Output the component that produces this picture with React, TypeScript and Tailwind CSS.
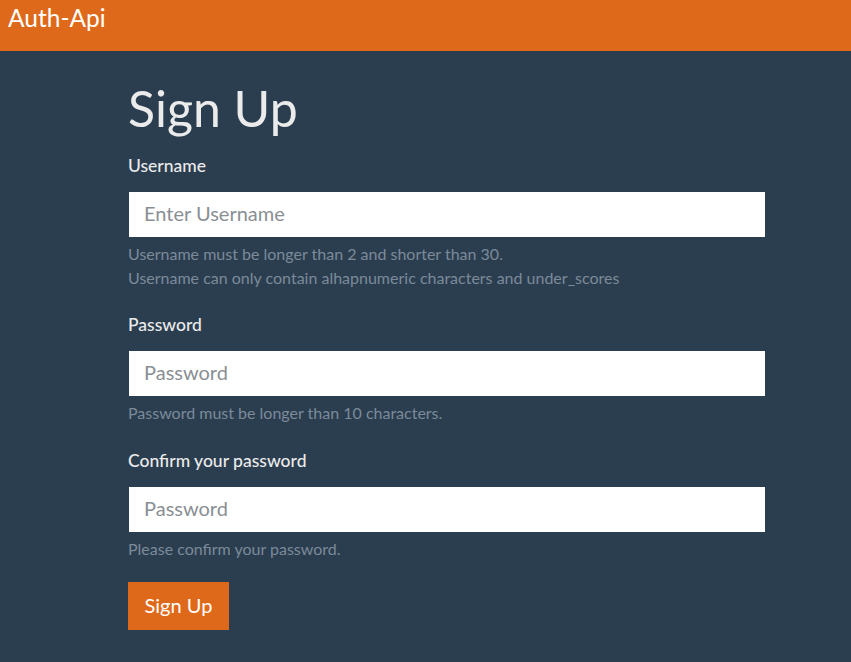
const inputCls =
  "mt-[14px] ml-[1px] h-[45px] w-[636px] bg-white px-[15px] pb-[4px] text-[20px] text-[#333] outline-none placeholder:text-[#8a8f94]";
const helpCls = "mt-[5px] text-[16px] leading-[24px] text-[#7b8a99]";
const labelCls = "text-[17.5px] font-medium leading-[24px] text-[#ebebeb]";

export default function App() {
  return (
    <div className="min-h-screen bg-[#2b3e50] font-['Lato',sans-serif] text-[#ebebeb]">
      <nav className="h-[51px] bg-[#df691a] px-2 pt-[2px]">
        <span className="text-[24.5px] leading-[32px] text-white">Auth-Api</span>
      </nav>
      <main className="pl-[128px]">
        <h1 className="mt-[27px] mb-[16px] text-[50px] leading-[60px] text-[#ebebeb]">Sign Up</h1>
        <form className="flex flex-col items-start">
          <label className={labelCls}>Username</label>
          <input placeholder="Enter Username" className={inputCls} />
          <p className={helpCls}>
            Username must be longer than 2 and shorter than 30.
            <br />
            Username can only contain alhapnumeric characters and under_scores
          </p>

          <label className={"mt-[23px] " + labelCls}>Password</label>
          <input type="password" placeholder="Password" className={inputCls} />
          <p className={helpCls}>Password must be longer than 10 characters.</p>

          <label className={"mt-[24px] " + labelCls}>Confirm your password</label>
          <input type="password" placeholder="Password" className={inputCls} />
          <p className={helpCls}>Please confirm your password.</p>

          <button
            type="button"
            className="mt-[21px] h-[48px] w-[101px] bg-[#df691a] pb-[3px] text-[20px] text-white"
          >
            Sign Up
          </button>
        </form>
      </main>
    </div>
  );
}
